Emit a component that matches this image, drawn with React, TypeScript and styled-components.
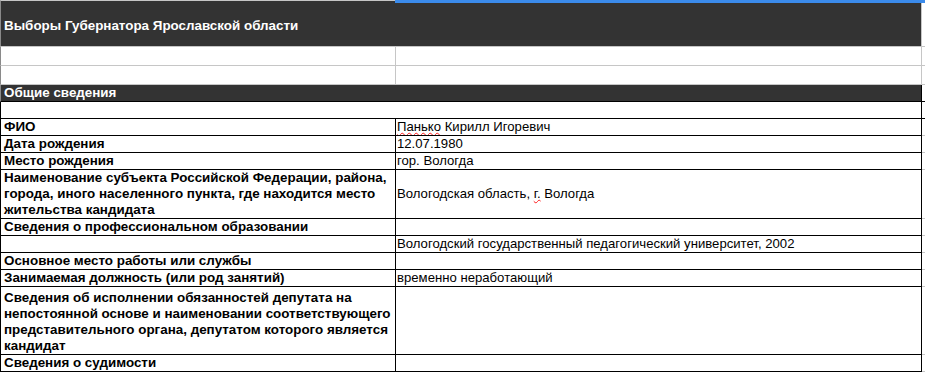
import React from 'react';
import styled, { createGlobalStyle } from 'styled-components';

const GRID = '#c6c6c6';
const EDGE = '#8a8a8a';
const LINE = '#000000';

type Align = 'top' | 'middle' | 'bottom';

interface DataRow {
  label: React.ReactNode;
  value?: React.ReactNode;
  height: number;
  valueAlign?: Align;
}

const GlobalStyle = createGlobalStyle`
  html, body {
    margin: 0;
    padding: 0;
    background: #ffffff;
  }
`;

const justify = (a?: Align) =>
  a === 'top' ? 'flex-start' : a === 'middle' ? 'center' : 'flex-end';

const Sheet = styled.div`
  position: relative;
  width: 925px;
  font-family: 'Liberation Sans', Arial, sans-serif;
  font-size: 13.15px;
  line-height: 16px;
  color: #000;
`;

const Selection = styled.div`
  position: absolute;
  top: 0;
  left: 395px;
  right: 0;
  height: 3px;
  background: #3b8beb;
`;

const Row = styled.div<{ $h: number }>`
  display: grid;
  grid-template-columns: 396px 526px 3px;
  height: ${p => p.$h}px;
`;

const Cell = styled.div<{
  $line: string;
  $edge?: string;
  $span?: boolean;
  $dark?: boolean;
  $bold?: boolean;
  $align?: Align;
  $top?: boolean;
}>`
  box-sizing: border-box;
  display: flex;
  flex-direction: column;
  justify-content: ${p => justify(p.$align)};
  padding: 0 2px 0 3px;
  white-space: nowrap;
  overflow: hidden;
  border-right: 1px solid ${p => p.$line};
  border-bottom: 1px solid ${p => p.$line};
  ${p => (p.$edge ? `border-left: 1px solid ${p.$edge};` : '')}
  ${p => (p.$top ? `border-top: 1px solid ${GRID};` : '')}
  ${p => (p.$span ? 'grid-column: span 2;' : '')}
  background: ${p => (p.$dark ? '#333333' : 'transparent')};
  color: ${p => (p.$dark ? '#ffffff' : '#000000')};
  font-weight: ${p => (p.$bold ? 700 : 400)};
  font-size: ${p => (p.$bold ? '13.4px' : '13.15px')};
`;

const ValueCell = styled(Cell)`
  padding-left: 1px;
`;

const TitleCell = styled(Cell)`
  padding-top: 17px;
`;

const Filler = styled.div<{ $line: string; $top?: boolean }>`
  box-sizing: border-box;
  border-bottom: 1px solid ${p => p.$line};
  ${p => (p.$top ? `border-top: 1px solid ${GRID};` : '')}
`;

const Misspelled = styled.span`
  text-decoration: underline wavy #ff1a1a;
  text-decoration-thickness: 1px;
  text-underline-offset: 1px;
`;

const rows: DataRow[] = [
  {
    label: 'ФИО',
    value: (
      <>
        <Misspelled>Панько</Misspelled> Кирилл Игоревич
      </>
    ),
    height: 17,
  },
  { label: 'Дата рождения', value: '12.07.1980', height: 17 },
  { label: 'Место рождения', value: 'гор. Вологда', height: 17 },
  {
    label: (
      <>
        Наименование субъекта Российской Федерации, района,
        <br />
        города, иного населенного пункта, где находится место
        <br />
        жительства кандидата
      </>
    ),
    value: (
      <span>
        Вологодская область, <Misspelled>г.</Misspelled> Вологда
      </span>
    ),
    height: 49,
    valueAlign: 'middle',
  },
  { label: 'Сведения о профессиональном образовании', height: 17 },
  {
    label: '',
    value: 'Вологодский государственный педагогический университет, 2002',
    height: 17,
  },
  { label: 'Основное место работы или службы', height: 17 },
  {
    label: 'Занимаемая должность (или род занятий)',
    value: 'временно неработающий',
    height: 17,
  },
  {
    label: (
      <>
        Сведения об исполнении обязанностей депутата на
        <br />
        непостоянной основе и наименовании соответствующего
        <br />
        представительного органа, депутатом которого является
        <br />
        кандидат
      </>
    ),
    height: 68,
  },
  { label: 'Сведения о судимости', height: 17 },
];

export default function App() {
  return (
    <>
      <GlobalStyle />
      <Sheet>
        <Row $h={47}>
          <TitleCell $line={GRID} $edge={EDGE} $span $dark $bold $top $align="top">
            Выборы Губернатора Ярославской области
          </TitleCell>
          <Filler $line={GRID} $top />
        </Row>
        {[0, 1].map(i => (
          <Row key={i} $h={19}>
            <Cell $line={GRID} $edge={EDGE} />
            <Cell $line={GRID} />
            <Filler $line={GRID} />
          </Row>
        ))}
        <Row $h={17}>
          <Cell $line={LINE} $edge={EDGE} $span $dark $bold>
            Общие сведения
          </Cell>
          <Filler $line={LINE} />
        </Row>
        <Row $h={17}>
          <Cell $line={LINE} $edge={LINE} $span />
          <Filler $line={LINE} />
        </Row>
        {rows.map((r, i) => (
          <Row key={i} $h={r.height}>
            <Cell $line={LINE} $edge={LINE} $bold>
              <div>{r.label}</div>
            </Cell>
            <ValueCell $line={LINE} $align={r.valueAlign}>
              <div>{r.value}</div>
            </ValueCell>
            <Filler $line={GRID} />
          </Row>
        ))}
        <Selection />
      </Sheet>
    </>
  );
}
